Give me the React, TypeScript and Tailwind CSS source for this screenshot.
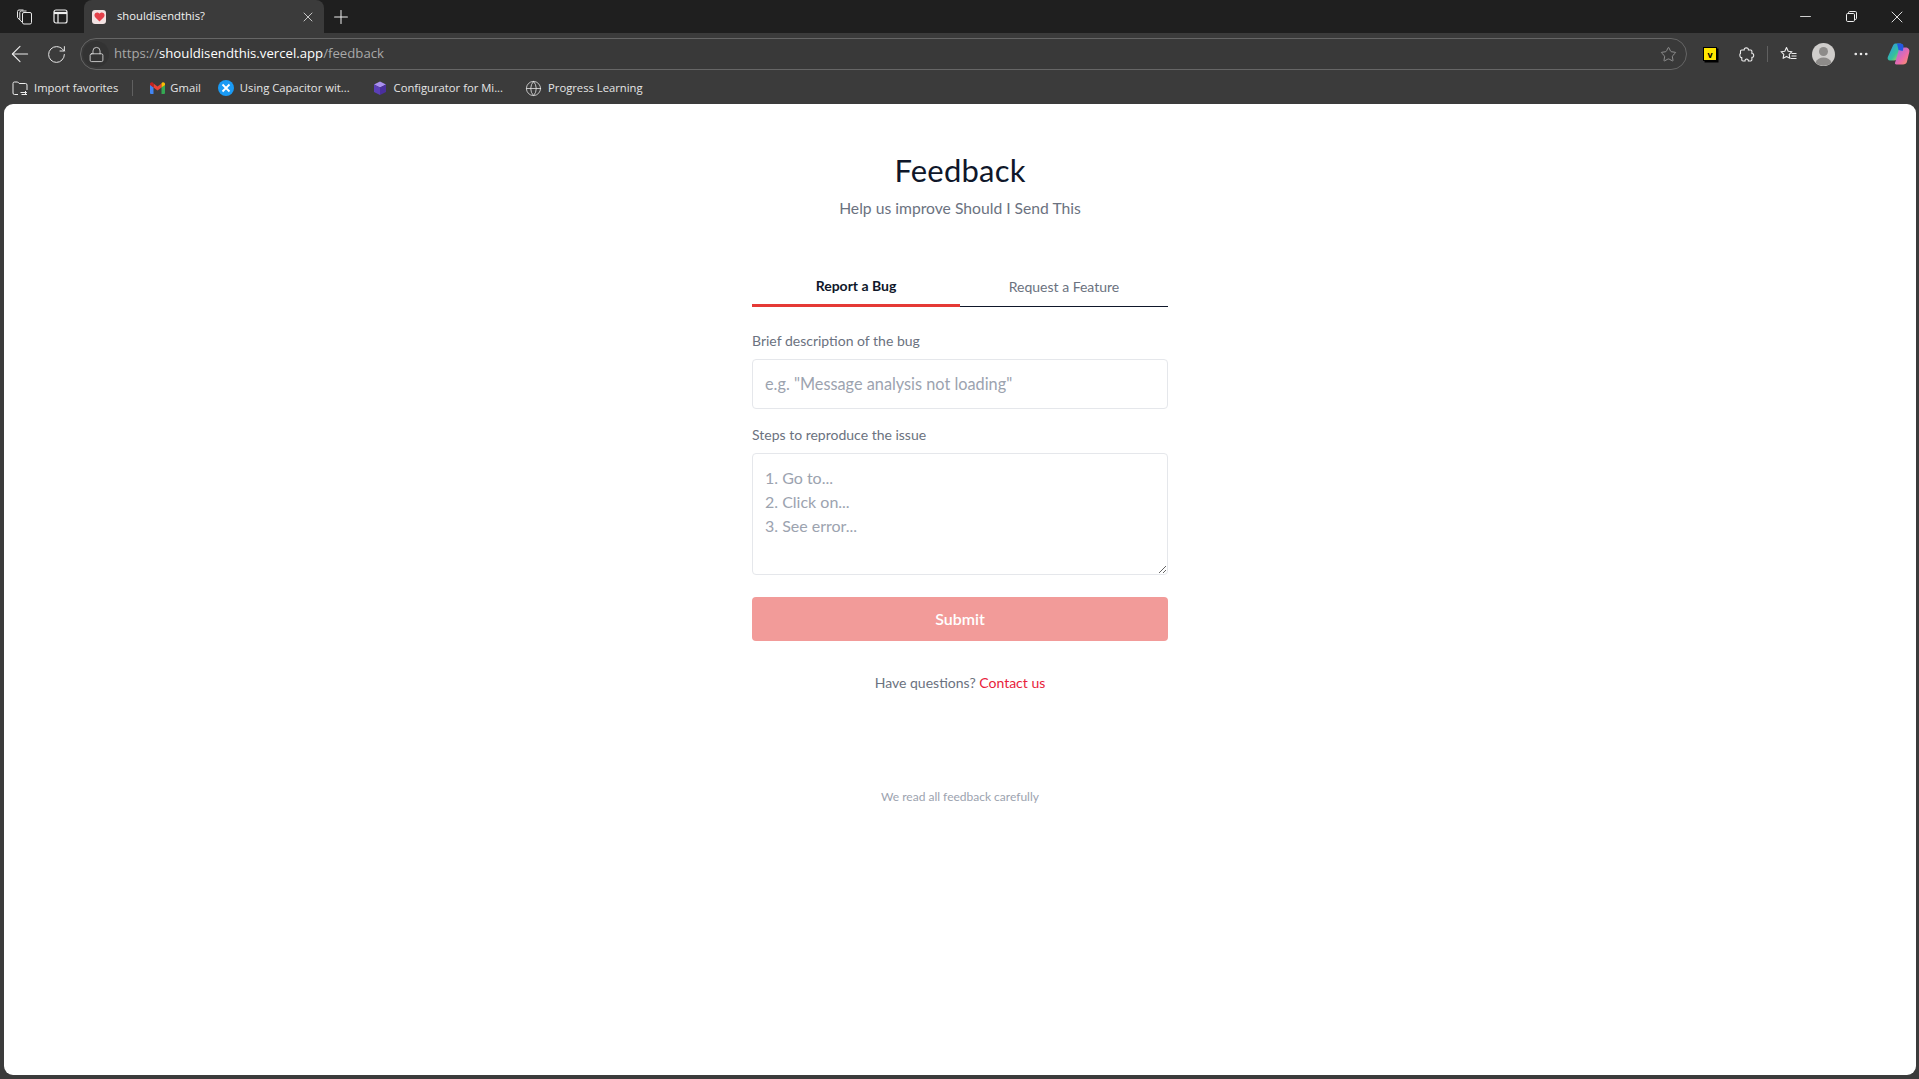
import React from "react";
import { ArrowLeft, RotateCw, Lock, Plus, X, Minus, Star, MoreHorizontal, Globe } from "lucide-react";

const ui = { fontFamily: '"Open Sans", "Noto Sans", sans-serif' };
const page = { fontFamily: 'Lato, "Noto Sans", sans-serif' };

function Workspaces() {
  return (
    <svg width="16" height="16" viewBox="0 0 16 16" fill="none" stroke="#e8e8e8" strokeWidth="1">
      <rect x="6.5" y="3.5" width="9" height="11.5" rx="1.5" />
      <path d="M6.5 13.5 3.8 11V3.5A1.5 1.5 0 0 1 5.3 2h5.2" />
      <path d="M3.8 11 1.5 8.5V2.5A1.5 1.5 0 0 1 3 1h4.5" />
    </svg>
  );
}

function TabsIcon() {
  return (
    <svg width="15" height="15" viewBox="0 0 15 15" fill="none" stroke="#f0f0f0" strokeWidth="1.2">
      <rect x="1" y="1" width="13" height="13" rx="2" />
      <path d="M1 4h13" strokeWidth="2.2" />
      <path d="M5 4v10" />
    </svg>
  );
}

function Heart() {
  return (
    <div className="w-[14px] h-[14px] rounded-[3px] bg-[#f3e3e3] flex items-center justify-center">
      <svg width="11" height="10" viewBox="0 0 24 22">
        <path d="M12 21 2.5 11.5C-1 7.5 1.5 1 7 1c2.2 0 4 1.2 5 3 1-1.8 2.800-3 5-3 5.500 0 8 6.500 4.500 10.500z" fill="#e5404a" />
      </svg>
    </div>
  );
}

function Restore() {
  return (
    <svg width="11" height="11" viewBox="0 0 11 11" fill="none" stroke="#f0f0f0" strokeWidth="1">
      <rect x="0.500" y="2.500" width="8" height="8" rx="1.200" />
      <path d="M2.500 2.500V1.700A1.200 1.200 0 0 1 3.700.500h5.600a1.200 1.200 0 0 1 1.200 1.200v5.600a1.200 1.200 0 0 1-1.200 1.200h-.8" />
    </svg>
  );
}

function ExtensionIcon() {
  return (
    <svg width="16" height="17" viewBox="0 0 16 17" fill="none" stroke="#ececec" strokeWidth="1.100" strokeLinejoin="round">
      <path d="M1.500 5.200c0-.7.500-1.200 1.200-1.200h2.600c-.9-2.900 4.900-2.900 4 0h2.400c.7 0 1.200.5 1.200 1.200v2.400c2.400-.7 2.400 4.300 0 3.600v2.600c0 .7-.5 1.200-1.200 1.200h-2.400c.5-2.600-3.700-2.600-3.200 0H4c-.7 0-1.200-.5-1.200-1.200v-2.200c-2.300.5-2.300-4.100-1.300-4.100z" />
    </svg>
  );
}

function FavList() {
  return (
    <svg width="17" height="16" viewBox="0 0 17 16" fill="none" stroke="#ececec" strokeWidth="1.100" strokeLinejoin="round">
      <path d="M6.500 1.500 8.200 5.200l3.800.5-2.800 2.700.7 3.900-3.400-1.900-3.400 1.900.7-3.900L1 5.700l3.800-.5z" />
      <path d="M11.500 7.500h5M11.500 10h5M10.500 12.500h6" />
    </svg>
  );
}

function Avatar() {
  return (
    <svg width="23" height="23" viewBox="0 0 23 23">
      <circle cx="11.500" cy="11.500" r="11.500" fill="#cfcdcb" />
      <circle cx="11.500" cy="8.500" r="4.500" fill="#8d8b89" />
      <path d="M3.500 19.500c1.500-3.500 4.500-5 8-5s6.500 1.500 8 5a11.500 11.500 0 0 1-16 0z" fill="#8d8b89" />
    </svg>
  );
}

function Copilot() {
  return (
    <svg width="23" height="22" viewBox="0 0 23 22">
      <defs>
        <linearGradient id="cpa" x1="0" y1="0" x2="1" y2="1">
          <stop offset="0" stopColor="#2c8ff0" />
          <stop offset="0.600" stopColor="#35c29a" />
          <stop offset="1" stopColor="#e6d13c" />
        </linearGradient>
        <linearGradient id="cpb" x1="0" y1="0" x2="1" y2="1">
          <stop offset="0" stopColor="#8f6cf0" />
          <stop offset="0.600" stopColor="#ee6ba8" />
          <stop offset="1" stopColor="#f79a5b" />
        </linearGradient>
      </defs>
      <path d="M6 2.500C6.700.800 8 .500 9.500.500H14l-3.500 14c-.5 2-1.500 3-3.500 3H3C1 17.500.200 15.500.800 14z" fill="url(#cpa)" />
      <path d="M12.500 4.500h6c2.500 0 4.500 2 3.800 4.500l-2.300 9.500c-.5 2.200-2 3-4 3H9.500c-1.500 0-2-1-1.200-2.500z" fill="url(#cpb)" />
      <path d="M10 .5h3.500c1.800 0 3.300 1 3 3.500l-.8 4-4.200-1z" fill="#2458e0" />
    </svg>
  );
}

function Gmail() {
  return (
    <svg width="15" height="12" viewBox="0 0 15 12">
      <path d="M0 2v9a1 1 0 0 0 1 1h2.500V5.500z" fill="#4285f4" />
      <path d="M15 2v9a1 1 0 0 1-1 1h-2.500V5.500z" fill="#34a853" />
      <path d="M3.500 5.500 7.500 8.500l4-3V1.500l-4 3-4-3z" fill="#ea4335" />
      <path d="M0 2c0-1.500 1.800-2.300 3-1.300l.5.800v4L0 3z" fill="#c5221f" />
      <path d="M15 2c0-1.500-1.800-2.300-3-1.300l-.5.800v4L15 3z" fill="#fbbc04" />
    </svg>
  );
}

function Capacitor() {
  return (
    <div className="w-4 h-4 rounded-full bg-[#1a9bf5] flex items-center justify-center">
      <svg width="10" height="10" viewBox="0 0 10 10" stroke="#ffffff" strokeWidth="1.800">
        <path d="M1.500 1.500 8.500 8.500M8.500 1.500 1.500 8.500" />
      </svg>
    </div>
  );
}

function Cube() {
  return (
    <svg width="14" height="15" viewBox="0 0 14 15">
      <path d="M7 .500 13 3.500 7 6.500 1 3.500z" fill="#a98ff0" />
      <path d="M1 3.500 7 6.500V14L1 11z" fill="#5b3fb8" />
      <path d="M13 3.500 7 6.500V14l6-3z" fill="#4a2f9e" />
    </svg>
  );
}

function FolderImport() {
  return (
    <svg width="17" height="15" viewBox="0 0 17 15" fill="none" stroke="#ececec" strokeWidth="1">
      <path d="M6 13.500H2.500a1.500 1.500 0 0 1-1.500-1.500V2.500A1.500 1.500 0 0 1 2.500 1h3.200l1.500 1.500h6.300a1.500 1.500 0 0 1 1.500 1.500v5" />
      <path d="M8.500 11.500h6M13 10l1.500 1.500L13 13M15 13.500H9.500" />
    </svg>
  );
}

function Bookmark({ icon, label, className = "" }: { icon: React.ReactNode; label: string; className?: string }) {
  return (
    <div className={`flex items-center text-[11.25px] text-[#e6e6e6] whitespace-nowrap ${className}`}>
      {icon}
      <span>{label}</span>
    </div>
  );
}

function BrowserChrome() {
  return (
    <div style={ui} className="bg-[#3b3b3b]">
      <div className="h-[33px] bg-[#1f1f1f] flex items-stretch">
        <div className="w-[84px] flex items-center pl-4 gap-[21px]">
          <Workspaces />
          <TabsIcon />
        </div>
        <div className="w-[240px] bg-[#3b3b3b] rounded-t-[8px] flex items-center pl-[8px] pr-[8px]">
          <Heart />
          <span className="ml-[11px] text-[11.25px] text-[#f2f2f2] flex-1">shouldisendthis?</span>
          <X size={16} color="#e8e8e8" strokeWidth={1.200} />
        </div>
        <div className="ml-[6px] flex items-center">
          <Plus size={22} color="#f0f0f0" strokeWidth={1.100} />
        </div>
        <div className="flex-1" />
        <div className="flex items-center pr-[12px]">
          <Minus size={17} color="#f0f0f0" strokeWidth={1.200} />
          <div className="ml-[32px]"><Restore /></div>
          <X size={20} color="#f0f0f0" strokeWidth={1.100} className="ml-[30px]" />
        </div>
      </div>
      <div className="h-[39px] pt-[3px] flex items-center">
        <div className="w-[80px] flex items-center pl-[7px] gap-[13px]">
          <ArrowLeft size={26} color="#ececec" strokeWidth={1} />
          <RotateCw size={21} color="#ececec" strokeWidth={1.100} />
        </div>
        <div className="w-[1607px] h-[32px] rounded-full border border-[#666666] bg-[#393939] flex items-center">
          <div className="w-[26px] h-[26px] ml-[2px] rounded-full bg-[#333333] flex items-center justify-center">
            <Lock size={17} color="#ececec" strokeWidth={1.100} />
          </div>
          <span className="ml-[5px] text-[13.2px] text-[#a8a8a8]">
            https://<span className="text-white">shouldisendthis.vercel.app</span>/feedback
          </span>
          <div className="flex-1" />
          <Star size={17} color="#9c9c9c" strokeWidth={1.200} className="mr-[9px]" />
        </div>
        <div className="flex-1 flex items-center pl-[16px]">
          <div className="w-[14px] h-[14px] bg-[#ffe600] border border-black flex items-center justify-center text-[9px] font-bold text-black leading-none shadow-[1.5px_1.5px_0_#000]">
            v
          </div>
          <div className="ml-[22px]"><ExtensionIcon /></div>
          <div className="w-px h-[16px] bg-[#606060] ml-[12px]" />
          <div className="ml-[12px]"><FavList /></div>
          <div className="ml-[15px]"><Avatar /></div>
          <MoreHorizontal size={18} color="#f0f0f0" strokeWidth={1.500} className="ml-[17px]" />
          <div className="ml-[17px]"><Copilot /></div>
        </div>
      </div>
      <div className="h-[32px] flex items-center pl-[12px]">
        <Bookmark icon={<FolderImport />} label="Import favorites" className="gap-[5px]" />
        <div className="w-px h-[16px] bg-[#606060] ml-[14px]" />
        <Bookmark icon={<Gmail />} label="Gmail" className="ml-[17px] gap-[5px]" />
        <Bookmark icon={<Capacitor />} label="Using Capacitor wit..." className="ml-[17px] gap-[6px]" />
        <Bookmark icon={<Cube />} label="Configurator for Mi..." className="ml-[23px] gap-[7px]" />
        <Bookmark icon={<Globe size={17} color="#e6e6e6" strokeWidth={1.100} />} label="Progress Learning" className="ml-[22px] gap-[6px]" />
      </div>
    </div>
  );
}

export default function App() {
  return (
    <div className="h-[1079px] overflow-hidden bg-[#3b3b3b] flex flex-col">
      <BrowserChrome />
      <main style={page} className="flex-1 ml-[4px] mb-[4px] mr-[3px] bg-white rounded-[9px] flex flex-col items-center">
        <h1 className="mt-[48px] text-[31px] leading-[36px] text-[#0f172a] font-normal tracking-[0.2px]">Feedback</h1>
        <p className="mt-[8px] text-[15.700px] leading-[24px] text-[#6b7280]">Help us improve Should I Send This</p>
        <div className="w-[416px] mt-[50px]">
          <div className="flex h-[37px] border-b border-[#0f172a]">
            <div className="w-1/2 h-[37px] border-b-[3px] border-[#e53935] text-center text-[14px] leading-[32px] font-bold text-[#0f172a]">Report a Bug</div>
            <div className="w-1/2 text-center text-[14px] leading-[34px] text-[#6b7280]">Request a Feature</div>
          </div>
          <label className="block mt-[24px] text-[14px] leading-[20px] text-[#6b7280]">Brief description of the bug</label>
          <input
            readOnly
            placeholder={'e.g. "Message analysis not loading"'}
            className="block mt-[8px] w-full h-[50px] px-3 pb-[1px] rounded-[4px] border border-[#e5e7eb] bg-white text-[16.300px] outline-none placeholder:text-[#9ca3af]"
          />
          <label className="block mt-[16px] text-[14px] leading-[20px] text-[#6b7280]">Steps to reproduce the issue</label>
          <textarea
            readOnly
            placeholder={"1. Go to...\n2. Click on...\n3. See error..."}
            className="block mt-[8px] w-full h-[122px] px-3 py-[12px] rounded-[4px] border border-[#e5e7eb] bg-white text-[16px] leading-[24px] outline-none placeholder:text-[#9ca3af]"
          />
          <button className="block mt-[22px] w-full h-[44px] rounded-[4px] bg-[#f29b99] text-white text-[16px] font-semibold">Submit</button>
          <p className="mt-[32px] text-center text-[14px] leading-[20px] text-[#6b7280]">
            Have questions? <span className="text-[#e8213a]">Contact us</span>
          </p>
          <p className="mt-[96px] text-center text-[12px] leading-[16px] text-[#9ca3af]">We read all feedback carefully</p>
        </div>
      </main>
    </div>
  );
}
